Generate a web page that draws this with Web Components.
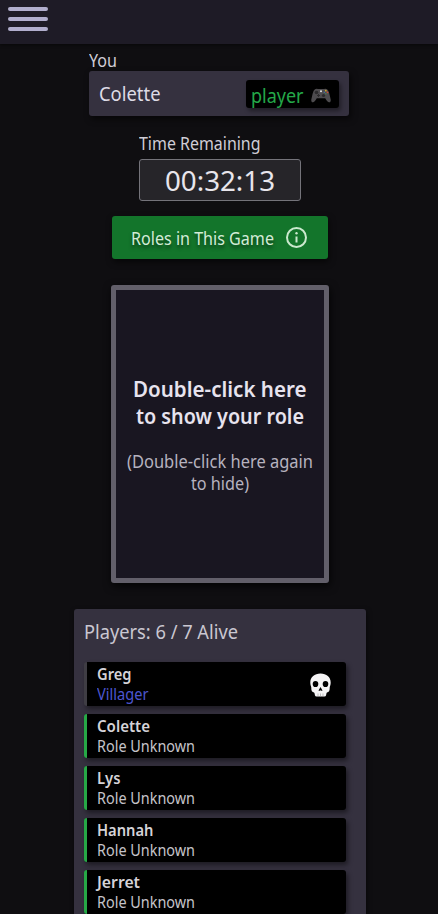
<!DOCTYPE html>
<html lang="en">
<head>
<meta charset="utf-8">
<title>Game in progress</title>
<style>
html,body{margin:0;height:914px;overflow:hidden;background:#0f0e11}
body{font-family:"Noto Sans","Open Sans",sans-serif;color:#d0cdd6}
</style>
</head>
<body>
<game-app>
  <nav-bar slot="nav"></nav-bar>
  <user-badge>
    <fit-text slot="label" size="17.5" line="22" width="28">You</fit-text>
    <fit-text slot="name" size="19.5" line="24" width="61.5">Colette</fit-text>
    <fit-text slot="kind" size="19.5" line="24" width="52.5">player</fit-text>
  </user-badge>
  <game-timer>
    <fit-text slot="label" size="17.5" line="22" width="121.5">Time Remaining</fit-text>
    <fit-text size="28" line="36" width="110">00:32:13</fit-text>
  </game-timer>
  <roles-button><fit-text size="17.5" line="22" width="143">Roles in This Game</fit-text></roles-button>
  <role-card>
    <fit-text slot="title" size="21" line="27" width="173.5" weight="600">Double-click here</fit-text>
    <fit-text slot="title" size="21" line="27" width="168" weight="600">to show your role</fit-text>
    <fit-text slot="hint" size="17.5" line="22" width="186">(Double-click here again</fit-text>
    <fit-text slot="hint" size="17.5" line="22" width="58">to hide)</fit-text>
  </role-card>
  <player-list>
    <fit-text slot="heading" size="19.5" line="24" width="154">Players: 6 / 7 Alive</fit-text>
    <player-row dead>
      <fit-text slot="name" size="15.5" line="20" width="34.5" weight="600">Greg</fit-text>
      <fit-text slot="role" size="15.5" line="20" width="51.5">Villager</fit-text>
    </player-row>
    <player-row>
      <fit-text slot="name" size="15.5" line="20" width="53" weight="600">Colette</fit-text>
      <fit-text slot="role" size="15.5" line="20" width="98">Role Unknown</fit-text>
    </player-row>
    <player-row>
      <fit-text slot="name" size="15.5" line="20" width="23.5" weight="600">Lys</fit-text>
      <fit-text slot="role" size="15.5" line="20" width="98">Role Unknown</fit-text>
    </player-row>
    <player-row>
      <fit-text slot="name" size="15.5" line="20" width="56.5" weight="600">Hannah</fit-text>
      <fit-text slot="role" size="15.5" line="20" width="98">Role Unknown</fit-text>
    </player-row>
    <player-row>
      <fit-text slot="name" size="15.5" line="20" width="43" weight="600">Jerret</fit-text>
      <fit-text slot="role" size="15.5" line="20" width="98">Role Unknown</fit-text>
    </player-row>
  </player-list>
</game-app>
<script>
function define(name, html, setup) {
  customElements.define(name, class extends HTMLElement {
    constructor() {
      super();
      this.attachShadow({mode: 'open'}).innerHTML = html;
    }
    connectedCallback() { if (setup) setup(this); }
  });
}

// One line of text condensed horizontally to a given width.
define('fit-text', `
<style>
:host{display:block;flex:none;white-space:nowrap}
span{display:inline-block;transform-origin:0 0;vertical-align:top}
</style><span><slot></slot></span>`, el => {
  const span = el.shadowRoot.querySelector('span');
  const width = +el.getAttribute('width');
  el.style.fontSize = el.getAttribute('size') + 'px';
  el.style.lineHeight = el.getAttribute('line') + 'px';
  el.style.height = el.getAttribute('line') + 'px';
  el.style.fontWeight = el.getAttribute('weight') || '400';
  el.style.width = width + 'px';
  span.style.transform = 'scaleX(' + width / span.getBoundingClientRect().width + ')';
});

define('game-app', `
<style>
:host{display:flex;flex-direction:column;align-items:center;height:914px;overflow:hidden}
::slotted(*){flex:none}
</style><slot name="nav"></slot><slot></slot>`);

define('nav-bar', `
<style>
:host{display:flex;align-self:stretch;box-sizing:border-box;height:44px;padding:7px 8px;background:#1e1b26;box-shadow:0 1px 3px #0008}
.menu{display:flex;flex-direction:column;gap:6px;width:40px}
.menu i{height:4px;border-radius:2px;background:#b1aecd}
</style><div class="menu"><i></i><i></i><i></i></div>`);

define('user-badge', `
<style>
:host{display:block;width:260px;margin-top:5px}
.box{display:flex;align-items:center;justify-content:space-between;box-sizing:border-box;height:45px;padding:0 10px;background:#35313f;border-radius:3px;box-shadow:2px 3px 6px #0009;color:#dedbe6}
.kind{display:flex;align-items:center;box-sizing:border-box;width:93px;height:28px;margin-top:1px;padding:3px 8px 0 5px;justify-content:space-between;background:#000;border-radius:3px;box-shadow:2px 3px 4px #0006;color:#24a849}
svg{display:block}
</style>
<slot name="label"></slot>
<div class="box"><div class="name"><slot name="name"></slot></div>
<div class="kind"><slot name="kind"></slot>
<svg width="20" height="15" viewBox="0 0 20 15">
<path d="M4 1.2Q5.500 .2 7 1h6q1.500-.8 3 .2Q17.500 2 18.300 5.500L19.700 11.500Q20 14.500 18 14.300 16.500 14 14.200 10.200H5.800Q3.500 14 2 14.300 0 14.500.3 11.500L1.700 5.500Q2.500 2 4 1.200Z" fill="#4d4b4e"/>
<circle cx="5.500" cy="4.500" r="1.800" fill="#2c2b2d"/><circle cx="12.500" cy="7.500" r="1.600" fill="#2c2b2d"/>
<path d="M7.500 6v3M6 7.500h3" stroke="#2c2b2d"/>
<circle cx="10" cy="3.300" r="1" fill="#e5e5e5"/><circle cx="14.800" cy="2.700" r=".9" fill="#d0a42b"/><circle cx="16.500" cy="4.300" r=".9" fill="#c84a3a"/><circle cx="13.300" cy="4.300" r=".7" fill="#4671a8"/><circle cx="14.900" cy="5.800" r=".7" fill="#448b55"/>
</svg></div></div>`);

define('game-timer', `
<style>
:host{display:block;width:162px;margin:16px 0 0 2px}
.box{display:flex;align-items:center;justify-content:center;box-sizing:border-box;height:42px;margin-top:5px;padding-bottom:1px;border:1px solid #74737a;border-radius:3px;background:#262529;color:#e8e6ec}
</style>
<slot name="label"></slot><div class="box"><slot></slot></div>`);

define('roles-button', `
<style>
:host{display:flex;align-items:center;gap:11.500px;box-sizing:border-box;width:216px;height:43px;margin:15px 0 0 2px;padding-left:18.500px;border-radius:3px;background:#13752b;color:#d3ecd6;text-shadow:0 3px 4px #0008;box-shadow:1px 3px 6px #0009}
svg{display:block}
</style>
<slot></slot>
<svg width="23" height="23" viewBox="0 0 23 23"><circle cx="11.500" cy="11.500" r="9.500" fill="none" stroke="#cbe9ce" stroke-width="2"/><path d="M11.500 10.500v6" stroke="#cbe9ce" stroke-width="2"/><circle cx="11.500" cy="7.300" r="1.200" fill="#cbe9ce"/></svg>`);

define('role-card', `
<style>
:host{display:flex;flex-direction:column;align-items:center;justify-content:center;box-sizing:border-box;width:218px;height:298px;margin:26px 0 0 2px;padding-top:1px;border:5px solid #625f6a;border-radius:3px;background:#191621;box-shadow:1px 3px 8px #000c;color:#e7e3ee}
.lines{display:flex;flex-direction:column;align-items:center}
.hint{margin-top:20px;color:#b6b2bf}
</style>
<div class="lines"><slot name="title"></slot></div>
<div class="lines hint"><slot name="hint"></slot></div>`);

define('player-list', `
<style>
:host{display:block;box-sizing:border-box;width:292px;height:400px;margin:26px 0 0 2px;padding:11px 20px 0 10px;border-radius:3px;background:#35313f;box-shadow:1px 2px 5px #0008;color:#cac7d1}
.rows{display:flex;flex-direction:column;gap:8px;margin-top:18px}
</style>
<slot name="heading"></slot><div class="rows"><slot></slot></div>`);

define('player-row', `
<style>
:host{display:flex;justify-content:space-between;align-items:center;box-sizing:border-box;height:44px;padding:0 15px 0 10px;border-left:3px solid #26a946;border-radius:3px;background:#000;box-shadow:2px 3px 5px #0007;color:#d5d3d8}
:host([dead]){border-left-color:#3f3d44}
:host([dead]) .role{color:#4c56cf}
.role{color:#c5c3c9}
svg{display:none;margin-top:2px}
:host([dead]) svg{display:block}
</style>
<div><slot name="name"></slot><div class="role"><slot name="role"></slot></div></div>
<svg width="21" height="24" viewBox="0 0 21 24">
<path d="M10.500.5C16.500.5 20.700 4 20.700 9.500c0 2.500-.8 3.500-1 5 0 1.800 0 3.600-1.500 4.400-1 .5-1.500.4-1.700 1.400l-.5 2.200q-.3 1-1.500 1H6.500q-1.200 0-1.500-1L4.500 20.300c-.2-1-.7-.9-1.700-1.400-1.500-.8-1.500-2.600-1.500-4.400-.2-1.500-1-2.500-1-5C.3 4 4.500.5 10.500.5Z" fill="#f5f4f5"/>
<ellipse cx="5.500" cy="11" rx="2.800" ry="3.100" fill="#000"/><ellipse cx="15.500" cy="11" rx="2.800" ry="3.100" fill="#000"/>
<path d="M10.500 14 8.500 17.500q.8.700 2-.3 1.200 1 2 .3Z" fill="#000"/><path d="M8 20.500v3M10.500 20.500v3M13 20.500v3" stroke="#999" stroke-width=".6"/></svg>`);
</script>
</body>
</html>
